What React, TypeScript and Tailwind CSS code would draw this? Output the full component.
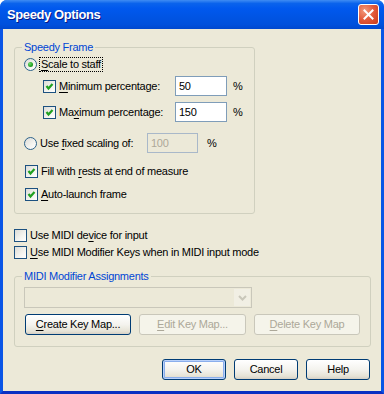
import React from "react";

const FONT = { fontFamily: '"Liberation Sans", Arial, sans-serif' };

function Check({ checked }: { checked: boolean }) {
  return (
    <span className="relative inline-block w-[13px] h-[13px] shrink-0 border border-[#1c5180] bg-[linear-gradient(135deg,#dcdcd7_0%,#f4f4f0_60%,#ffffff_100%)]">
      {checked && (
        <svg width="11" height="11" viewBox="0 0 11 11" className="absolute left-0 top-0">
          <path d="M2.5 5 L4.5 7.5 L8.5 3" fill="none" stroke="#21a121" strokeWidth="2.2" />
        </svg>
      )}
    </span>
  );
}

function Radio({ checked }: { checked: boolean }) {
  return (
    <span className="relative inline-flex items-center justify-center w-[13px] h-[13px] shrink-0 rounded-full border border-[#2c628b] bg-[linear-gradient(135deg,#dcdcd7_0%,#f4f4f0_60%,#ffffff_100%)]">
      {checked && (
        <span className="w-[5px] h-[5px] rounded-full bg-[radial-gradient(circle_at_35%_35%,#6fdc6f_0%,#21a121_60%,#177c17_100%)]" />
      )}
    </span>
  );
}

function U({ children }: { children: React.ReactNode }) {
  return <span className="underline underline-offset-[2px]">{children}</span>;
}

function Btn({
  children,
  w,
  disabled,
  isDefault,
}: {
  children: React.ReactNode;
  w: string;
  disabled?: boolean;
  isDefault?: boolean;
}) {
  if (disabled) {
    return (
      <div
        className={`${w} h-[21px] rounded-[3px] border border-[#c9c7ba] bg-[#f5f4ea] text-[#aca899] flex items-center justify-center`}
      >
        {children}
      </div>
    );
  }
  return (
    <div
      className={`${w} h-[21px] rounded-[3px] border border-[#003c74] bg-[linear-gradient(180deg,#ffffff_0%,#f4f3ee_50%,#e6e3d6_85%,#d6d0c5_100%)] flex items-center justify-center text-black ${
        isDefault ? "shadow-[inset_0_0_0_1px_#b9d1fa,inset_0_0_0_2px_#8aaeec]" : ""
      }`}
    >
      {children}
    </div>
  );
}

function Group({
  label,
  className,
  children,
}: {
  label: string;
  className: string;
  children: React.ReactNode;
}) {
  return (
    <div className={`relative border border-[#d0d0bf] rounded-[3px] ${className}`}>
      <span className="absolute left-[7px] top-[-8px] px-[2px] bg-[#ece9d8] text-[#0046d5] leading-[14px]">
        {label}
      </span>
      {children}
    </div>
  );
}

export default function App() {
  return (
    <div className="w-[384px] h-[394px] text-[11px] tracking-[-0.25px] text-black" style={FONT}>
      <div className="w-full h-full flex flex-col rounded-t-[7px] overflow-hidden bg-[#0054e3]">
        {/* title bar */}
        <div className="h-[29px] shrink-0 flex items-center justify-between pl-[7px] pr-[5px] bg-[linear-gradient(180deg,#3f8cf3_0%,#0a63ec_12%,#0058ee_30%,#0054e3_60%,#0050dc_85%,#0048ce_100%)]">
          <span className="text-white font-bold text-[13px] tracking-[-0.4px] leading-none [text-shadow:1px_1px_0_#0a1883]">
            Speedy Options
          </span>
          <div className="w-[21px] h-[21px] rounded-[3px] border border-white bg-[radial-gradient(circle_at_30%_30%,#f29a7c_0%,#e2593a_50%,#c83a1a_100%)] flex items-center justify-center">
            <svg width="11" height="11" viewBox="0 0 11 11">
              <path d="M1.5 1.5 L9.5 9.5 M9.5 1.5 L1.5 9.5" stroke="white" strokeWidth="2" strokeLinecap="square" />
            </svg>
          </div>
        </div>
        {/* client with frame */}
        <div className="flex-1 flex flex-col border-x-[3px] border-b-[3px] border-x-[#0a55e6] border-b-[#0a2fc2]">
          <div className="flex-1 bg-[#ece9d8] pt-[18px] pl-[11px] pr-[11px] flex flex-col">
            <Group label="Speedy Frame" className="w-[241px] h-[167px] pt-[8px] pl-[9px]">
              {/* row 1 */}
              <div className="h-[16px] flex items-center">
                <Radio checked />
                <span className="ml-[2px] border border-dotted border-black px-[1px] leading-[13px]">
                  <U>S</U>cale to staff
                </span>
              </div>
              {/* row 2 */}
              <div className="h-[20px] mt-[4px] flex items-center pl-[19px]">
                <Check checked />
                <span className="ml-[3px] w-[116px]">
                  <U>M</U>inimum percentage:
                </span>
                <div className="w-[52px] h-[20px] border border-[#7f9db9] bg-white flex items-center pl-[3px]">50</div>
                <span className="ml-[6px]">%</span>
              </div>
              {/* row 3 */}
              <div className="h-[20px] mt-[6px] flex items-center pl-[19px]">
                <Check checked />
                <span className="ml-[3px] w-[116px]">
                  Ma<U>x</U>imum percentage:
                </span>
                <div className="w-[52px] h-[20px] border border-[#7f9db9] bg-white flex items-center pl-[3px]">150</div>
                <span className="ml-[6px]">%</span>
              </div>
              {/* row 4 */}
              <div className="h-[20px] mt-[11px] flex items-center">
                <Radio checked={false} />
                <span className="ml-[3px] w-[107px]">
                  Use <U>f</U>ixed scaling of:
                </span>
                <div className="w-[51px] h-[20px] border border-[#a9b8c9] flex items-center pl-[3px] text-[#aca899]">100</div>
                <span className="ml-[9px]">%</span>
              </div>
              {/* row 5 */}
              <div className="h-[16px] mt-[10px] flex items-center pl-[1px]">
                <Check checked />
                <span className="ml-[3px]">
                  Fill with <U>r</U>ests at end of measure
                </span>
              </div>
              {/* row 6 */}
              <div className="h-[16px] mt-[7px] flex items-center pl-[1px]">
                <Check checked />
                <span className="ml-[3px]">
                  <U>A</U>uto-launch frame
                </span>
              </div>
            </Group>

            <div className="h-[16px] mt-[13px] flex items-center">
              <Check checked={false} />
              <span className="ml-[3px]">
                Use MIDI de<U>v</U>ice for input
              </span>
            </div>
            <div className="h-[16px] mt-[1px] flex items-center">
              <Check checked={false} />
              <span className="ml-[3px]">
                <U>U</U>se MIDI Modifier Keys when in MIDI input mode
              </span>
            </div>

            <Group label="MIDI Modifier Assignments" className="mt-[16px] w-[357px] h-[71px] pt-[10px] pl-[9px]">
              <div className="w-[228px] h-[21px] border border-[#c9c7ba] flex justify-end p-[1px]">
                <div className="w-[16px] h-full bg-[#f1efe4] flex items-center justify-center">
                  <svg width="9" height="6" viewBox="0 0 9 6">
                    <path d="M1 1 L4.5 4.5 L8 1" fill="none" stroke="#c9c7ba" strokeWidth="2" />
                  </svg>
                </div>
              </div>
              <div className="mt-[6px] flex gap-[8px] pl-[1px]">
                <Btn w="w-[106px]">
                  <span>
                    <U>C</U>reate Key Map...
                  </span>
                </Btn>
                <Btn w="w-[107px]" disabled>
                  <span>
                    <U>E</U>dit Key Map...
                  </span>
                </Btn>
                <Btn w="w-[106px]" disabled>
                  <span>
                    <U>D</U>elete Key Map
                  </span>
                </Btn>
              </div>
            </Group>

            <div className="mt-[12px] flex justify-end gap-[8px] pr-[0px]">
              <Btn w="w-[64px]" isDefault>
                OK
              </Btn>
              <Btn w="w-[64px]">Cancel</Btn>
              <Btn w="w-[64px]">Help</Btn>
            </div>
          </div>
        </div>
      </div>
    </div>
  );
}
